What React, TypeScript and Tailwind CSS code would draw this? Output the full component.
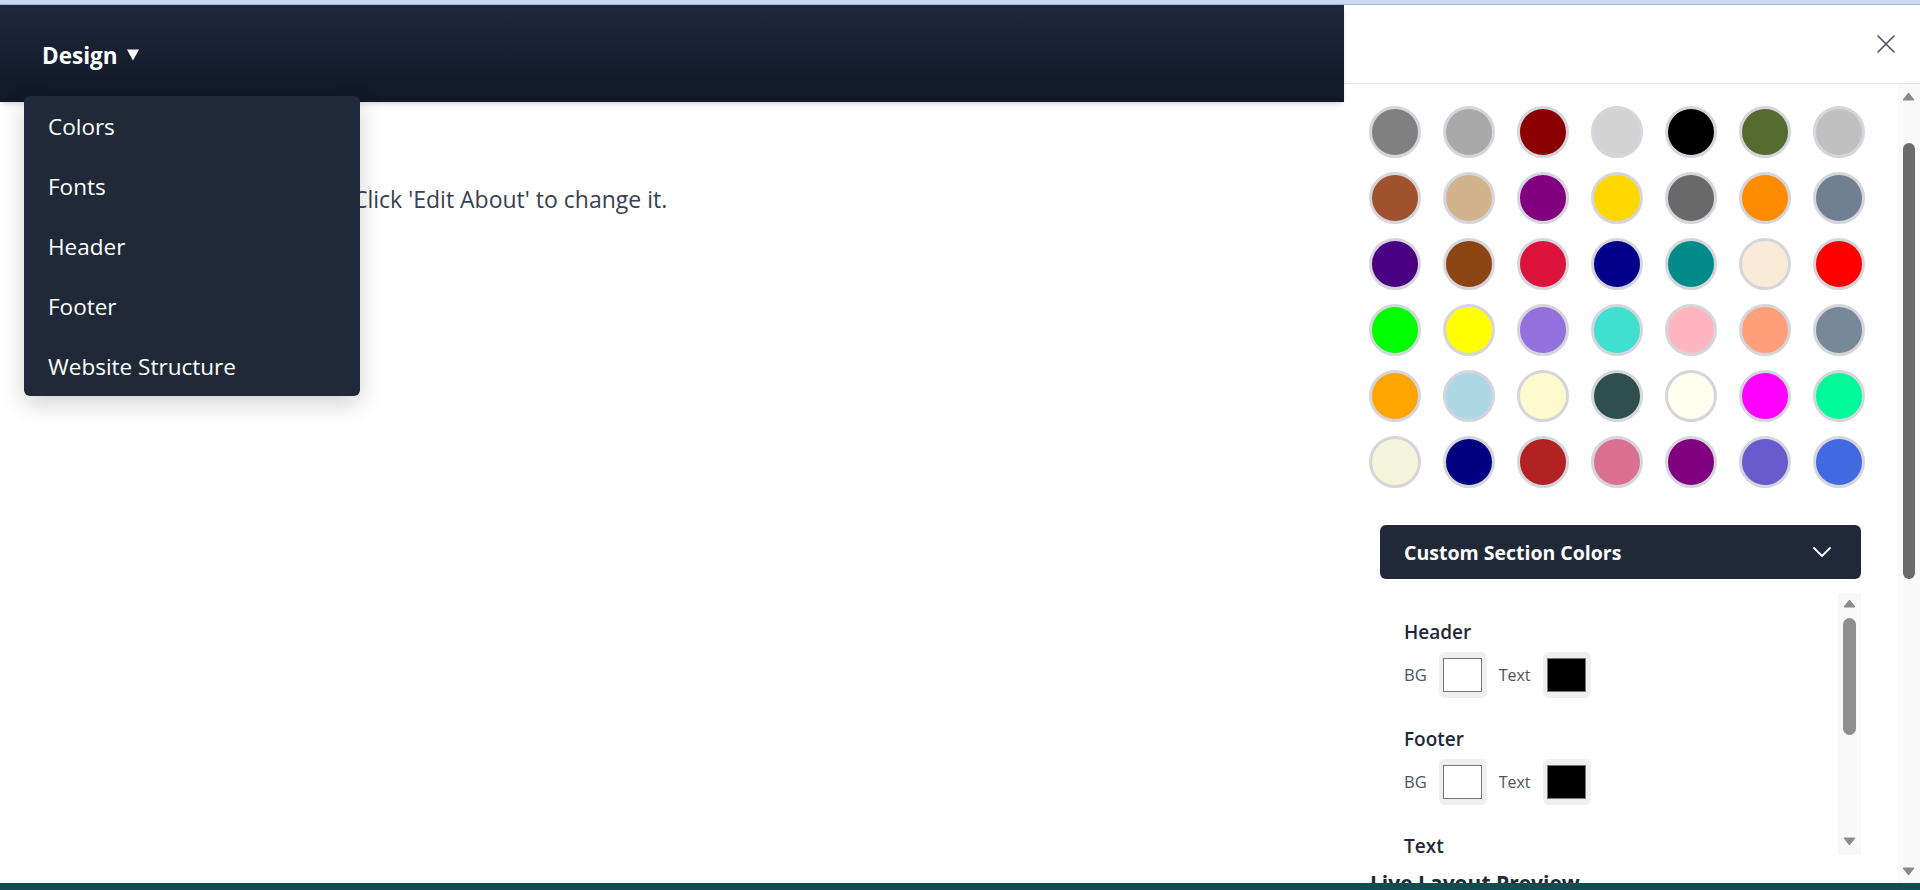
import React from "react";

const COLORS = [
  "#808080", "#a9a9a9", "#8b0000", "#d3d3d3", "#000000", "#556b2f", "#c0c0c0",
  "#a0522d", "#d2b48c", "#800080", "#ffd700", "#696969", "#ff8c00", "#708090",
  "#4b0082", "#8b4513", "#dc143c", "#00008b", "#008b8b", "#faebd7", "#ff0000",
  "#00ff00", "#ffff00", "#9370db", "#40e0d0", "#ffb6c1", "#ffa07a", "#778899",
  "#ffa500", "#add8e6", "#fffacd", "#2f4f4f", "#fffff0", "#ff00ff", "#00fa9a",
  "#f5f5dc", "#000080", "#b22222", "#db7093", "#800080", "#6a5acd", "#4169e1",
];

const MENU = ["Colors", "Fonts", "Header", "Footer", "Website Structure"];

function UpArrow({ color }: { color: string }) {
  return (
    <svg width="13" height="9" viewBox="0 0 13 9">
      <path d="M6.5 1 L12 8 L1 8 Z" fill={color} stroke={color} strokeWidth="1" strokeLinejoin="round" />
    </svg>
  );
}

function DownArrow({ color }: { color: string }) {
  return (
    <svg width="13" height="9" viewBox="0 0 13 9">
      <path d="M1 1 L12 1 L6.5 8 Z" fill={color} stroke={color} strokeWidth="1" strokeLinejoin="round" />
    </svg>
  );
}

function Swatch({ color }: { color: string }) {
  return (
    <div className="w-[48px] h-[46px] bg-[#efefef] rounded-[6px] flex items-center justify-center">
      <div className="w-[39px] h-[34px] border border-[#767676]" style={{ backgroundColor: color }} />
    </div>
  );
}

function Section({ title }: { title: string }) {
  return (
    <div className="mb-[27px]">
      <div className="text-[19px] leading-[28px] font-semibold text-[#1f2937]">{title}</div>
      <div className="mt-[6px] h-[46px] flex items-center gap-3">
        <span className="text-[16.5px] text-[#4b5563]">BG</span>
        <Swatch color="#ffffff" />
        <span className="text-[16px] text-[#4b5563]">Text</span>
        <Swatch color="#000000" />
      </div>
    </div>
  );
}

export default function App() {
  return (
    <div className="w-[1920px] h-[890px] relative overflow-hidden bg-white font-['Open_Sans','Noto_Sans',sans-serif]">
      <div className="h-[5px] bg-[#cbdaf0] border-b border-[#a3b6d4]" />
      <div className="flex h-[878px]">
        {/* Left page */}
        <div className="flex-1 relative">
          <header className="h-[97px] bg-linear-to-b from-[#1e293b] to-[#111827] shadow-md flex items-center pl-[42px]">
            <span className="text-white text-[22.5px] font-bold leading-[30px] mt-[4px]">Design</span>
            <svg className="ml-[9px] mt-[2px]" width="12" height="12" viewBox="0 0 12 12">
              <path d="M0 0.5 L12 0.5 L6 11.5 Z" fill="#ffffff" />
            </svg>
          </header>
          <main className="pl-[353px] pt-[82px]">
            <p className="text-[23px] leading-[31px] text-[#374151]">Click 'Edit About' to change it.</p>
          </main>
          <div className="absolute left-[24px] top-[91px] w-[336px] bg-[#1f2937] rounded-[6px] shadow-[0_8px_24px_rgba(0,0,0,0.18)] flex flex-col">
            {MENU.map((m) => (
              <div key={m} className="h-[60px] px-[24px] pt-[2px] flex items-center text-white text-[22.5px]">
                {m}
              </div>
            ))}
          </div>
        </div>

        {/* Right panel */}
        <aside className="w-[576px] flex flex-col bg-white">
          <div className="h-[79px] border-b border-[#e5e7eb] flex items-center justify-end pr-[25px]">
            <svg width="18" height="18" viewBox="0 0 18 18">
              <path d="M1 1 L17 17 M17 1 L1 17" stroke="#4b5563" strokeWidth="1.6" strokeLinecap="round" />
            </svg>
          </div>
          <div className="flex-1 flex overflow-hidden">
            <div className="flex-1 overflow-hidden pt-[22px] pl-[25px]">
              <div className="grid grid-cols-[repeat(7,52px)] gap-x-[22px] gap-y-[14px]">
                {COLORS.map((c, i) => (
                  <div
                    key={i}
                    className="w-[52px] h-[52px] rounded-full border-[3px] border-[#d5d5dc]"
                    style={{ backgroundColor: c }}
                  />
                ))}
              </div>

              <div className="mt-[37px] ml-[11px] w-[481px] h-[54px] bg-[#1f2937] rounded-[6px] flex items-center justify-between pl-[24px] pr-[30px]">
                <span className="text-white text-[19.5px] font-bold mt-[2px]">Custom Section Colors</span>
                <svg width="18" height="10" viewBox="0 0 18 10">
                  <path d="M1 1 L9 9 L17 1" fill="none" stroke="#ffffff" strokeWidth="1.8" strokeLinecap="round" strokeLinejoin="round" />
                </svg>
              </div>

              <div className="mt-[14px] ml-[11px] w-[481px] h-[262px] flex">
                <div className="flex-1 overflow-hidden pl-[24px] pt-[25px]">
                  <Section title="Header" />
                  <Section title="Footer" />
                  <Section title="Text" />
                </div>
                <div className="w-[23px] bg-[#f8f8f8] relative">
                  <div className="absolute left-[5px] top-[6px]">
                    <UpArrow color="#8c8c8c" />
                  </div>
                  <div className="absolute left-[5px] top-[25px] w-[13px] h-[117px] rounded-full bg-[#8e8e8e]" />
                  <div className="absolute left-[5px] bottom-[9px]">
                    <DownArrow color="#8c8c8c" />
                  </div>
                </div>
              </div>

              <div className="mt-[14px] ml-[1px] text-[21px] leading-[28px] font-bold text-[#1f2937] whitespace-nowrap">
                Live Layout Preview
              </div>
            </div>

            {/* outer scrollbar */}
            <div className="w-[22px] bg-[#f9f9f9] relative">
              <div className="absolute left-[4px] top-[8px]">
                <UpArrow color="#8a8a8a" />
              </div>
              <div className="absolute left-[5px] top-[59px] w-[12px] h-[436px] rounded-full bg-[#6b6b6b]" />
              <div className="absolute left-[4px] bottom-[7px]">
                <DownArrow color="#8a8a8a" />
              </div>
            </div>
          </div>
        </aside>
      </div>
      <div className="h-[7px] bg-[#0f4d52]" />
    </div>
  );
}
